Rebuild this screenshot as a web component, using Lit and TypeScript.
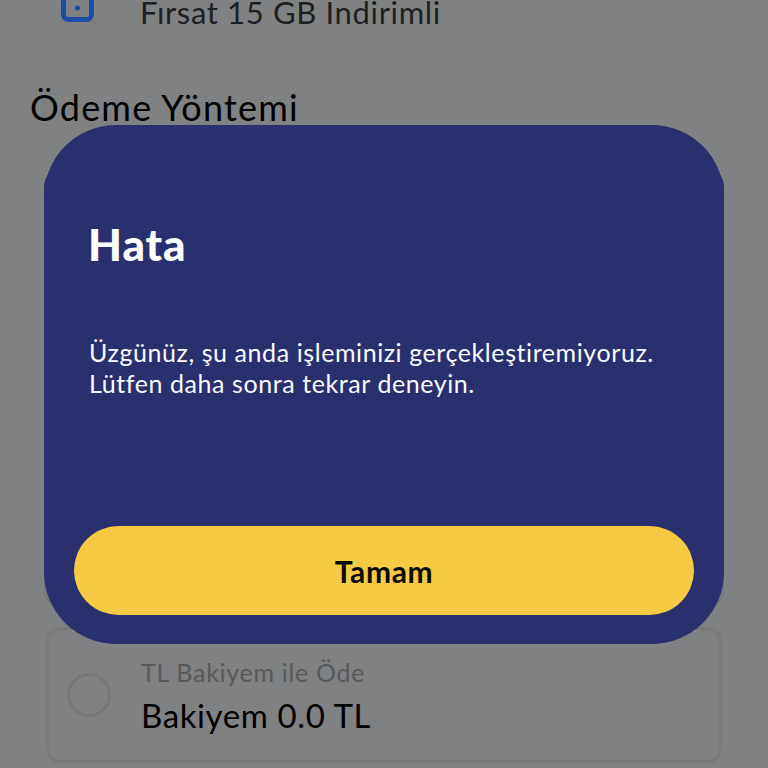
import { LitElement, html, css } from "lit";
import { customElement } from "lit/decorators.js";

@customElement("app-root")
export class AppRoot extends LitElement {
  static styles = css`
    :host { display: block; width: 768px; height: 768px; overflow: hidden; position: relative; background: #808182; font-family: Lato, "Noto Sans", sans-serif; color: #050505; }
    .page { display: flex; flex-direction: column; padding: 0 46px 0 46px; margin-top: -21px; }
    .offer { display: flex; align-items: center; height: 66px; padding-left: 15px; gap: 45px; }
    .offer svg { flex: none; }
    .offer span { font-size: 31px; line-height: 24px; color: #1d1f22; letter-spacing: 0.65px; }
    h2 { margin: 41px 0 0 -16px; font-weight: 400; font-size: 36px; line-height: 42px; letter-spacing: 1.2px; color: #000; }
    .method { margin: 39px 0 0 -2px; width: 680px; height: 442px; padding: 3px; border-radius: 20px; background: linear-gradient(#2b2f55 50%, #767778 50%); box-sizing: border-box; display: flex; }
    .method-fill { flex: 1; border-radius: 17px; background: #808182; }
    .balance { margin-top: 18px; height: 136px; border: 3px solid #797a7b; border-radius: 14px; display: flex; align-items: center; gap: 30px; padding-left: 18px; box-sizing: border-box; }
    .radio { flex: none; width: 44px; height: 44px; border: 3px solid #767778; border-radius: 50%; box-sizing: border-box; }
    .labels { display: flex; flex-direction: column; gap: 9px; }
    .small { font-size: 25px; line-height: 30px; color: #58595a; letter-spacing: 0.7px; }
    .big { font-size: 33px; line-height: 38px; color: #000; letter-spacing: 0.6px; }
    .modal { position: absolute; left: 44px; top: 125px; width: 680px; height: 519px; box-sizing: border-box; padding: 95px 30px 29px; border-radius: 72px; background: #2a306e; color: #fff; display: flex; flex-direction: column; }
    h1 { margin: 0 0 0 14px; font-size: 44px; line-height: 48px; font-weight: 900; letter-spacing: 0.9px; }
    p { margin: 69px 0 0 15px; font-size: 25px; line-height: 31px; letter-spacing: 0.58px; color: #fafafc; }
    button { margin-top: auto; height: 89px; border: 0; border-radius: 45px; background: #f6cb43; color: #0b0b0b; font: 700 30px Lato, sans-serif; letter-spacing: 0.6px; }
  `;

  render() {
    return html`
      <div class="page">
        <div class="offer">
          <svg width="34" height="34" viewBox="0 0 34 34" fill="none">
            <rect x="2.5" y="-10" width="28" height="34.5" rx="5" stroke="#1d4ca3" stroke-width="5"/>
            <circle cx="16.5" cy="13" r="2.5" fill="#1d4ca3"/>
          </svg>
          <span>Fırsat 15 GB İndirimli</span>
        </div>
        <h2>Ödeme Yöntemi</h2>
        <div class="method"><div class="method-fill"></div></div>
        <div class="balance">
          <div class="radio"></div>
          <div class="labels">
            <div class="small">TL Bakiyem ile Öde</div>
            <div class="big">Bakiyem 0.0 TL</div>
          </div>
        </div>
      </div>
      <div class="modal">
        <h1>Hata</h1>
        <p>Üzgünüz, şu anda işleminizi gerçekleştiremiyoruz.<br />Lütfen daha sonra tekrar deneyin.</p>
        <button>Tamam</button>
      </div>
    `;
  }
}
